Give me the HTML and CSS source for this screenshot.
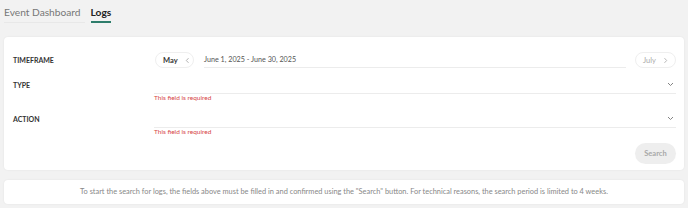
FILE: index.html
```html
<!DOCTYPE html>
<html lang="en">
<head>
<meta charset="utf-8">
<title>Logs</title>
<link rel="stylesheet" href="styles.css">
</head>
<body>
<nav class="tabs">
  <a class="tab">Event Dashboard</a>
  <a class="tab active">Logs</a>
</nav>
<section class="card form">
  <div class="row timeframe">
    <div class="label">TIMEFRAME</div>
    <div class="field range">
      <button class="pill prev"><span>May</span><svg class="chev" viewBox="0 0 6 8" width="5" height="7"><path d="M4.2 1.2 L1.6 4 L4.2 6.8" fill="none" stroke="#999" stroke-width="0.9"/></svg></button>
      <div class="dates">June 1, 2025 - June 30, 2025</div>
      <button class="pill next"><span>July</span><svg class="chev" viewBox="0 0 6 8" width="5" height="7"><path d="M1.8 1.2 L4.4 4 L1.8 6.8" fill="none" stroke="#aaaaaa" stroke-width="1"/></svg></button>
    </div>
  </div>
  <div class="row select-row">
    <div class="label">TYPE</div>
    <div class="field">
      <div class="select"><svg class="down" viewBox="0 0 8 6" width="7" height="5"><path d="M1 1.2 L4 4.2 L7 1.2" fill="none" stroke="#777" stroke-width="1.1"/></svg></div>
      <div class="error">This field is required</div>
    </div>
  </div>
  <div class="row select-row">
    <div class="label">ACTION</div>
    <div class="field">
      <div class="select"><svg class="down" viewBox="0 0 8 6" width="7" height="5"><path d="M1 1.2 L4 4.2 L7 1.2" fill="none" stroke="#777" stroke-width="1.1"/></svg></div>
      <div class="error">This field is required</div>
    </div>
  </div>
  <div class="actions">
    <button class="search">Search</button>
  </div>
</section>
<section class="card info">
  To start the search for logs, the fields above must be filled in and confirmed using the "Search" button. For technical reasons, the search period is limited to 4 weeks.
</section>
</body>
</html>
```
FILE: styles.css
```css
* { box-sizing: border-box; }
html, body { margin: 0; padding: 0; }
body {
  background: #f2f2f2;
  font-family: Lato, "Open Sans", sans-serif;
  color: #444;
  width: 688px;
  height: 208px;
  overflow: hidden;
}
.tabs {
  display: flex;
  gap: 6px;
  padding: 4px 4px 0 4px;
  height: 23px;
}
.tab {
  font-size: 10.2px;
  color: #777;
  line-height: 16px;
  height: 19px;
  border-bottom: 1px solid #e8e8e8;
  padding-right: 4px;
}
.tab.active {
  color: #222;
  font-weight: 700;
  border-bottom: 2px solid #2e7d6b;
  padding-right: 0;
  height: 19px;
}
.card {
  background: #fff;
  margin: 0 4px;
  border-radius: 4px;
  box-shadow: 0 0 2px rgba(0,0,0,0.08);
}
.form {
  margin-top: 14px;
  height: 133px;
  padding: 15px 8px 0 9px;
  display: flex;
  flex-direction: column;
}
.row {
  display: grid;
  grid-template-columns: 141px 1fr;
}
.label {
  font-size: 7px;
  font-weight: 700;
  color: #333;
}
.timeframe .label { line-height: 16px; }
.range {
  display: flex;
  align-items: center;
  height: 16px;
}
.pill {
  font-family: inherit;
  background: #fff;
  border: 1px solid #efefef;
  border-radius: 8px;
  height: 16px;
  padding: 0;
  display: flex;
  align-items: center;
  font-size: 7.5px;
  flex: none;
}
.pill .chev { flex: none; display: block; }
.prev { margin-left: 1px; width: 39px; padding-left: 7px; gap: 7px; font-weight: 700; color: #333; }
.next { width: 41px; color: #aaa; padding-left: 7px; gap: 7px; }
.dates {
  flex: 1;
  margin: 0 9px 0 10px;
  font-size: 7.2px;
  color: #555;
  height: 16px;
  line-height: 15px;
  border-bottom: 1px solid #ececec;
}
.select-row { margin-top: 8px; }
.select-row .label { line-height: 18px; }
.select {
  height: 18px;
  border-bottom: 1px solid #ececec;
  display: flex;
  align-items: center;
  justify-content: flex-end;
  padding-right: 2px;
}
.error {
  font-size: 6.5px;
  color: #d64545;
  line-height: 8px;
}
.actions {
  display: flex;
  justify-content: flex-end;
  margin-top: 7px;
}
.search {
  font-family: inherit;
  background: #eeeeee;
  border: none;
  border-radius: 11px;
  width: 41px;
  height: 21px;
  padding: 0;
  font-size: 7.5px;
  font-weight: 700;
  color: #a8a8a8;
}
.info {
  margin-top: 10px;
  height: 24px;
  font-size: 7.4px;
  color: #888;
  text-align: center;
  line-height: 24px;
}
```
